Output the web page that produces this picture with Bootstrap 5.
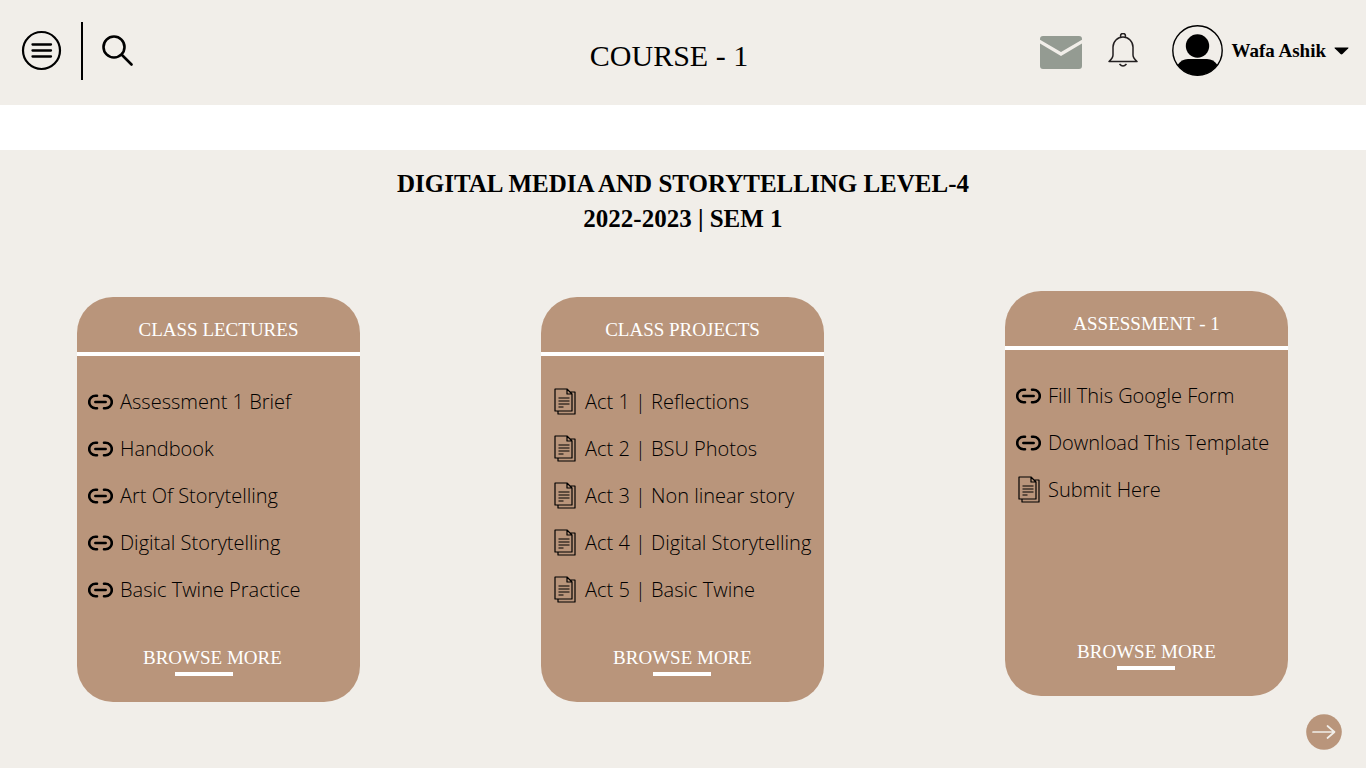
<!DOCTYPE html>
<html lang="en">
<head>
<meta charset="utf-8">
<meta name="viewport" content="width=device-width, initial-scale=1">
<title>Course - 1</title>
<link href="https://cdn.jsdelivr.net/npm/bootstrap@5.3.0/dist/css/bootstrap.min.css" rel="stylesheet">
<style>
  :root { --sand: #f1eee9; --clay: #b9957b; --sage: #949b92; }
  body { font-family: "Open Sans", sans-serif; color: #000; background: var(--sand); }
  svg { display: block; flex: none; }
  .serif { font-family: "Liberation Serif", serif; }
  .bare { border: 0; background: none; padding: 0; color: #000; }
  .topbar { display: grid; grid-template-columns: 1fr auto 1fr; height: 105px; padding: 0 17px 4px 21px; }
  .topbar h1 { font-size: 30px; line-height: 36px; margin: 10px 32px 0 0; }
  .divider { width: 2px; height: 58px; background: #000; margin: 0 19px; }
  .username { font-size: 19px; line-height: 24px; font-weight: 700; }
  .gapband { height: 45px; background: #fff; }
  .term { font-size: 25px; line-height: 35px; font-weight: 700; margin: 0; padding-top: 16px; }
  .decks { padding: 61px 78px 0 77px; }
  .deck { width: 283px; height: 405px; border-radius: 36px; background: var(--clay); overflow: hidden; }
  .deck.raised { margin-top: -6px; }
  .deck h3 { font-size: 19px; line-height: 24px; color: #fff; margin: 0; padding: 21px 0 10px; border-bottom: 4px solid #fff; }
  .deck ul { margin: 0; padding: 22px 0 0 11px; }
  .deck li a { height: 47px; gap: 7px; font-size: 20px; font-weight: 300; color: #000; white-space: nowrap; }
  .deck .icon-box { width: 25px; flex: none; display: flex; justify-content: center; }
  .pages-deck li a { gap: 8px; }
  .browse { font-size: 19px; line-height: 24px; color: #fff; margin: 0 auto 26px; }
  .browse::after { content: ""; display: block; width: 58px; height: 4px; margin: 2px auto 0; background: #fff; }
  .browse-start { margin-left: 66px; }
  .browse-start::after { margin-left: 32px; }
  .next { padding: 12px 24px 18px 0; }
</style>
</head>
<body>
<svg width="0" height="0" class="position-absolute" aria-hidden="true">
  <symbol id="link" viewBox="0 0 25 16">
    <path d="M9 1.700H7.500a6.200 6.200 0 0 0 0 12.600H9M16 1.700h1.500a6.200 6.200 0 0 1 0 12.600H16" fill="none" stroke="#000" stroke-width="2.600" stroke-linecap="round"/>
    <path d="M7.300 8h10.400" stroke="#000" stroke-width="2.500" stroke-linecap="round"/>
  </symbol>
  <symbol id="pages" viewBox="0 0 22 27">
    <path d="M1 1h12l5 5v17H1zM13 1v5h5M16 4h5v22H4v-3" fill="none" stroke="#000" stroke-width="1.200" stroke-linejoin="round"/>
    <path d="M4.500 10h11M4.500 13h11M4.500 16h11M4.500 19h5" stroke="#000" stroke-width="1.200"/>
  </symbol>
</svg>

<header class="topbar align-items-center">
  <div class="d-flex align-items-center">
    <button type="button" class="bare" aria-label="Menu">
      <svg width="41" height="41" viewBox="0 0 41 41" fill="none" stroke="#000"><circle cx="20.500" cy="20.500" r="18.500" stroke-width="2.200"/><path d="M11.500 14.500h18.500M11.500 20.500h18.500M11.500 26.500h18.500" stroke-width="2.300" stroke-linecap="round"/></svg>
    </button>
    <div class="divider"></div>
    <button type="button" class="bare" aria-label="Search">
      <svg width="31" height="31" viewBox="0 0 31 31" fill="none" stroke="#000" stroke-width="2.600" stroke-linecap="round"><circle cx="12" cy="12" r="10.500"/><path d="M20 20l9.500 9.500"/></svg>
    </button>
  </div>
  <h1 class="serif fw-normal">COURSE - 1</h1>
  <div class="d-flex align-items-center justify-content-end">
    <button type="button" class="bare mt-1" aria-label="Messages">
      <svg width="42" height="33" viewBox="0 0 42 33"><path d="M3 0h36q3 0 3 3v.700L21 16 0 3.700V3q0-3 3-3zM0 7.500 21 20 42 7.500V30q0 3-3 3H3q-3 0-3-3z" fill="#949b92"/></svg>
    </button>
    <button type="button" class="bare mx-4" aria-label="Notifications">
      <svg width="34" height="35" viewBox="0 0 34 35" fill="none" stroke="#231f20" stroke-width="1.500" stroke-linejoin="round"><path d="M7 22V14a10 10 0 0 1 20 0v8q0 3 4 6.500H3Q7 25 7 22zM14.500 4.500V3a2.500 2.500 0 0 1 5 0v1.500M13.500 31q3.500 4 7 0"/></svg>
    </button>
    <button type="button" class="bare d-flex align-items-center gap-2 serif ms-2">
      <svg width="51" height="51" viewBox="0 0 51 51"><circle cx="25.500" cy="25.500" r="24.700" fill="none" stroke="#000" stroke-width="1.400"/><circle cx="25.500" cy="21" r="11.700"/><path d="M5.500 40q4-6 10.500-6h19q6.500 0 10.500 6a24.800 24.800 0 0 1-40 0z"/></svg>
      <span class="username">Wafa Ashik</span>
      <svg width="15" height="8" viewBox="0 0 15 8"><path d="M1 .500h13q1 0 .3.800L8.500 7q-1 .9-2 0L.700 1.300Q0 .500 1 .500z"/></svg>
    </button>
  </div>
</header>
<div class="gapband"></div>

<main>
  <h2 class="term serif text-center">DIGITAL MEDIA AND STORYTELLING LEVEL-4<br>2022-2023 | SEM 1</h2>
  <div class="decks d-flex flex-wrap justify-content-between align-items-start">
    <section class="deck d-flex flex-column">
      <h3 class="serif text-center">CLASS LECTURES</h3>
      <ul class="list-unstyled flex-grow-1">
        <li><a href="#" class="d-flex align-items-center text-decoration-none"><span class="icon-box"><svg width="25" height="16"><use href="#link"/></svg></span>Assessment 1 Brief</a></li>
        <li><a href="#" class="d-flex align-items-center text-decoration-none"><span class="icon-box"><svg width="25" height="16"><use href="#link"/></svg></span>Handbook</a></li>
        <li><a href="#" class="d-flex align-items-center text-decoration-none"><span class="icon-box"><svg width="25" height="16"><use href="#link"/></svg></span>Art Of Storytelling</a></li>
        <li><a href="#" class="d-flex align-items-center text-decoration-none"><span class="icon-box"><svg width="25" height="16"><use href="#link"/></svg></span>Digital Storytelling</a></li>
        <li><a href="#" class="d-flex align-items-center text-decoration-none"><span class="icon-box"><svg width="25" height="16"><use href="#link"/></svg></span>Basic Twine Practice</a></li>
      </ul>
      <a href="#" class="browse browse-start serif text-decoration-none">BROWSE MORE</a>
    </section>
    <section class="deck pages-deck d-flex flex-column">
      <h3 class="serif text-center">CLASS PROJECTS</h3>
      <ul class="list-unstyled flex-grow-1">
        <li><a href="#" class="d-flex align-items-center text-decoration-none"><span class="icon-box"><svg width="22" height="27"><use href="#pages"/></svg></span>Act 1 | Reflections</a></li>
        <li><a href="#" class="d-flex align-items-center text-decoration-none"><span class="icon-box"><svg width="22" height="27"><use href="#pages"/></svg></span>Act 2 | BSU Photos</a></li>
        <li><a href="#" class="d-flex align-items-center text-decoration-none"><span class="icon-box"><svg width="22" height="27"><use href="#pages"/></svg></span>Act 3 | Non linear story</a></li>
        <li><a href="#" class="d-flex align-items-center text-decoration-none"><span class="icon-box"><svg width="22" height="27"><use href="#pages"/></svg></span>Act 4 | Digital Storytelling</a></li>
        <li><a href="#" class="d-flex align-items-center text-decoration-none"><span class="icon-box"><svg width="22" height="27"><use href="#pages"/></svg></span>Act 5 | Basic Twine</a></li>
      </ul>
      <a href="#" class="browse serif text-decoration-none">BROWSE MORE</a>
    </section>
    <section class="deck raised d-flex flex-column">
      <h3 class="serif text-center">ASSESSMENT - 1</h3>
      <ul class="list-unstyled flex-grow-1">
        <li><a href="#" class="d-flex align-items-center text-decoration-none"><span class="icon-box"><svg width="25" height="16"><use href="#link"/></svg></span>Fill This Google Form</a></li>
        <li><a href="#" class="d-flex align-items-center text-decoration-none"><span class="icon-box"><svg width="25" height="16"><use href="#link"/></svg></span>Download This Template</a></li>
        <li><a href="#" class="d-flex align-items-center text-decoration-none"><span class="icon-box"><svg width="22" height="27"><use href="#pages"/></svg></span>Submit Here</a></li>
      </ul>
      <a href="#" class="browse serif text-decoration-none">BROWSE MORE</a>
    </section>
  </div>
  <div class="next d-flex justify-content-end">
    <button type="button" class="bare" aria-label="Next page">
      <svg width="36" height="36" viewBox="0 0 36 36"><circle cx="18" cy="18" r="17.800" fill="#b9957b"/><path d="M7 18h21M21.500 12l7 6-7 6" fill="none" stroke="#f1eee9" stroke-width="1.700" stroke-linecap="round" stroke-linejoin="round"/></svg>
    </button>
  </div>
</main>
<script src="https://cdn.jsdelivr.net/npm/bootstrap@5.3.0/dist/js/bootstrap.bundle.min.js"></script>
</body>
</html>
